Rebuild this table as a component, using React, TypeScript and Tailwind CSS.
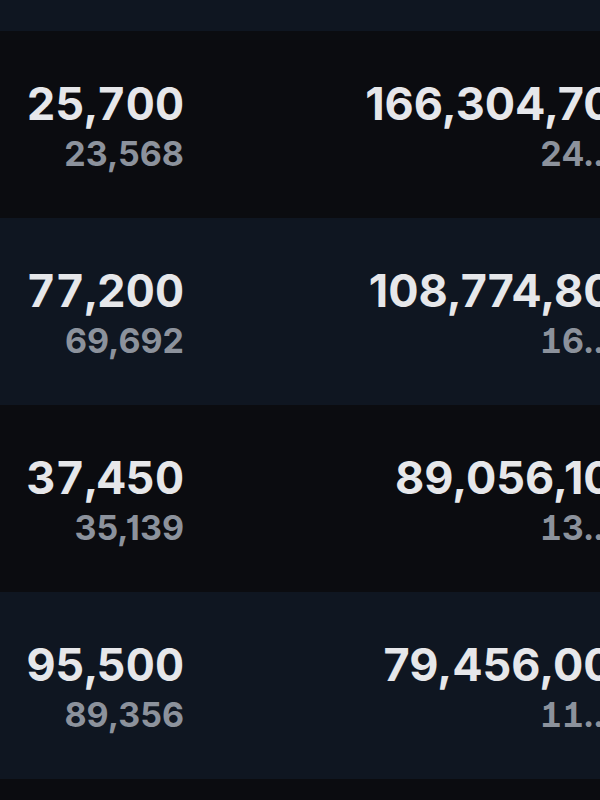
import React from "react";

const rows = [
  { a: "25,700", b: "23,568", c: "166,304,700", d: "24.8%" },
  { a: "77,200", b: "69,692", c: "108,774,800", d: "16.2%" },
  { a: "37,450", b: "35,139", c: "89,056,100", d: "13.3%" },
  { a: "95,500", b: "89,356", c: "79,456,000", d: "11.9%" },
];

export default function App() {
  return (
    <div
      className="w-[600px] h-[800px] overflow-hidden bg-[#0b0c10]"
      style={{ fontFamily: "Inter, 'Noto Sans', sans-serif" }}
    >
      <div className="h-[31px] bg-[#0f1621]" />
      {rows.map((r, i) => (
        <div
          key={i}
          className={`h-[187px] flex items-center pt-[3px] ${i % 2 === 0 ? "bg-[#0b0c10]" : "bg-[#0f1621]"}`}
        >
          <div className="w-[184px] shrink-0 flex flex-col items-end gap-[10px]">
            <div className="text-[45px] leading-[46px] font-bold text-[#e6e7ea] tabular-nums">{r.a}</div>
            <div className="text-[34px] leading-[34px] font-bold text-[#8c929c] [font-feature-settings:'cv01']">{r.b}</div>
          </div>
          <div className="w-[460px] shrink-0 flex flex-col items-end gap-[10px]">
            <div className="text-[45px] leading-[46px] font-bold text-[#e6e7ea] whitespace-nowrap">{r.c}</div>
            <div className="w-[88px] mr-[16px] truncate text-left text-[34px] leading-[34px] font-bold text-[#8c929c] [font-feature-settings:'cv01','tnum']">{r.d}</div>
          </div>
        </div>
      ))}
    </div>
  );
}
